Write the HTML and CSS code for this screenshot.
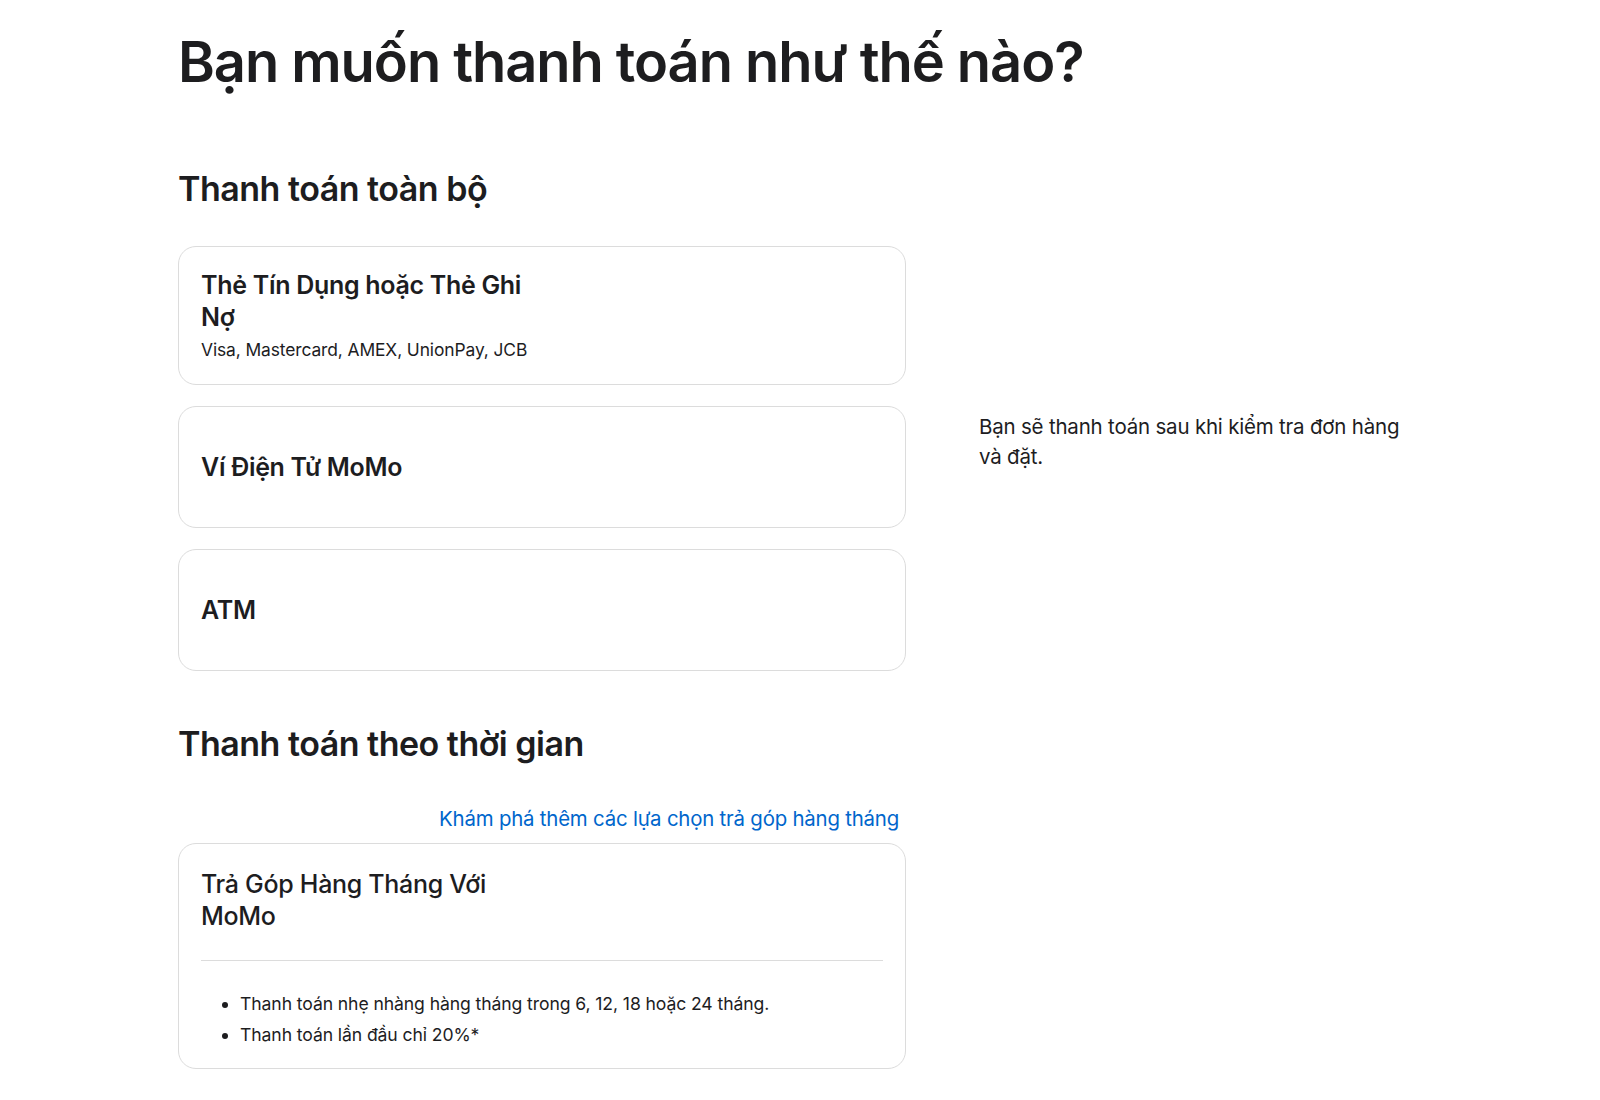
FILE: index.html
```html
<!DOCTYPE html>
<html lang="vi">
<head>
<meta charset="utf-8">
<title>Thanh toán</title>
<link rel="stylesheet" href="styles.css">
</head>
<body>
<main class="page">
  <h1 class="page-title">Bạn muốn thanh toán như thế nào?</h1>
  <div class="layout">
    <div class="main-col">
      <section class="group">
        <h2 class="group-title">Thanh toán toàn bộ</h2>
        <div class="options">
          <div class="option option-card">
            <div class="option-name">Thẻ Tín Dụng hoặc Thẻ Ghi Nợ</div>
            <div class="option-sub">Visa, Mastercard, AMEX, UnionPay, JCB</div>
          </div>
          <div class="option option-tall">
            <div class="option-name">Ví Điện Tử MoMo</div>
          </div>
          <div class="option option-tall">
            <div class="option-name">ATM</div>
          </div>
        </div>
      </section>
      <section class="group group-second">
        <h2 class="group-title">Thanh toán theo thời gian</h2>
        <div class="explore-row"><a class="explore-link" href="#">Khám phá thêm các lựa chọn trả góp hàng tháng</a></div>
        <div class="option option-install">
          <div class="option-name option-name-light">Trả Góp Hàng Tháng Với MoMo</div>
          <div class="divider"></div>
          <ul class="bullets">
            <li>Thanh toán nhẹ nhàng hàng tháng trong 6, 12, 18 hoặc 24 tháng.</li>
            <li>Thanh toán lần đầu chỉ 20%*</li>
          </ul>
        </div>
      </section>
    </div>
    <aside class="side-col">
      <p class="side-note">Bạn sẽ thanh toán sau khi kiểm tra đơn hàng và đặt.</p>
    </aside>
  </div>
</main>
</body>
</html>
```
FILE: styles.css
```css
* { box-sizing: border-box; }
html, body { margin: 0; padding: 0; background: #fff; }
body {
  font-family: Inter, "Noto Sans", "Liberation Sans", sans-serif;
  color: #1d1d1f;
}
.page {
  padding: 26px 0 20px 178px;
}
.page-title {
  margin: 0;
  font-size: 56px;
  line-height: 72px;
  font-weight: 600;
  letter-spacing: -1.05px;
}
.layout {
  display: flex;
  gap: 73px;
  margin-top: 71px;
}
.main-col { width: 728px; flex: none; }
.side-col { width: 440px; flex: none; padding-top: 243px; }
.group-title {
  margin: 0;
  font-size: 34px;
  line-height: 40px;
  font-weight: 600;
  letter-spacing: -0.5px;
}
.options {
  display: flex;
  flex-direction: column;
  gap: 21px;
  margin-top: 37px;
}
.option {
  border: 1px solid #dcdcdc;
  border-radius: 18px;
  padding: 22px;
}
.option-card { padding: 22px 22px 22px; }
.option-tall {
  height: 122px;
  display: flex;
  align-items: center;
}
.option-name {
  font-size: 25px;
  line-height: 32px;
  font-weight: 600;
  letter-spacing: -0.3px;
  max-width: 335px;
}
.option-sub {
  font-size: 17.4px;
  line-height: 24px;
  margin-top: 5px;
  letter-spacing: -0.1px;
}
.group-second { margin-top: 53px; }
.explore-row {
  display: flex;
  justify-content: flex-end;
  margin-top: 42px;
  padding-right: 7px;
}
.explore-link {
  color: #0066cc;
  text-decoration: none;
  font-size: 20.4px;
  line-height: 26px;
  letter-spacing: -0.2px;
}
.option-install {
  margin-top: 11px;
  padding: 24px 22px 18px;
}
.option-name-light { font-weight: 500; }
.divider {
  height: 1px;
  background: #dcdcdc;
  margin-top: 28px;
}
.bullets {
  margin: 27px 0 0;
  padding-left: 39px;
  font-size: 17.6px;
  line-height: 31px;
  letter-spacing: -0.1px;
}
.side-note {
  margin: 0;
  font-size: 20.5px;
  line-height: 30px;
  letter-spacing: -0.2px;
}
```
